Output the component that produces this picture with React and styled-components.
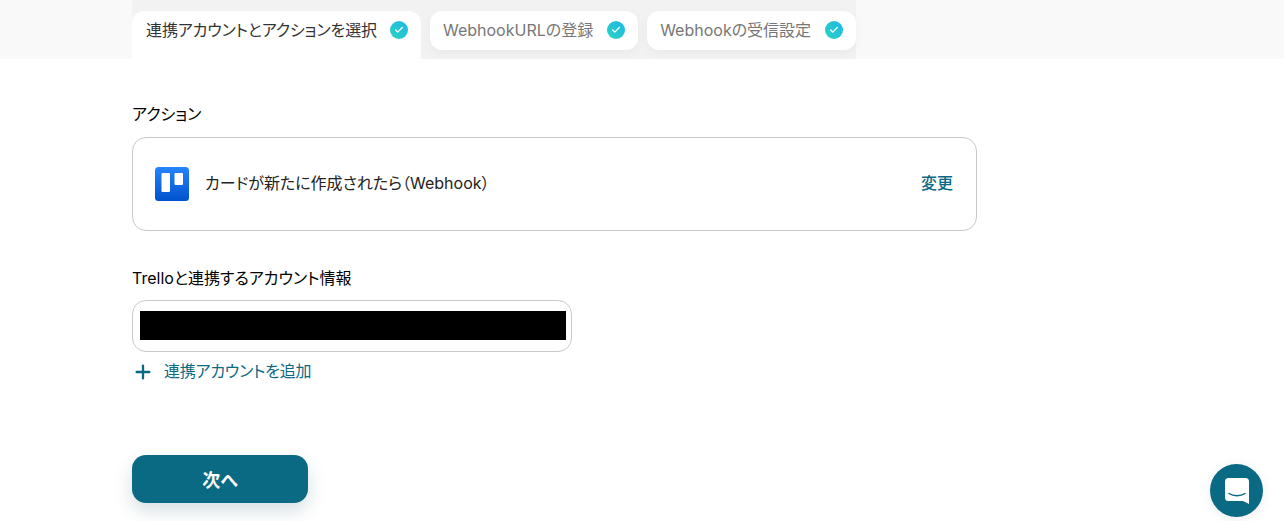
import styled, { createGlobalStyle } from 'styled-components';
import { LuPlus, LuCheck } from 'react-icons/lu';

const GlobalStyle = createGlobalStyle`
  html, body {
    margin: 0;
    padding: 0;
    background: #fff;
    overflow: hidden;
  }
  body {
    font-family: Inter, "Noto Sans CJK JP", sans-serif;
    font-feature-settings: "palt";
  }
`;

const Page = styled.div`
  width: 1284px;
  height: 521px;
  position: relative;
  overflow: hidden;
`;

const TabBar = styled.div`
  height: 59px;
  background: #f9f9f9;
  padding-left: 132px;
  box-sizing: border-box;
`;

const TabList = styled.div`
  display: inline-flex;
  align-items: flex-start;
  height: 59px;
  gap: 9px;
  background: #f2f2f2;
`;

const Tab = styled.div`
  display: flex;
  align-items: center;
  gap: ${props => (props.$active ? '13px' : '14px')};
  box-sizing: border-box;
  height: ${props => (props.$active ? '48px' : '39px')};
  margin-top: 11px;
  padding: ${props => (props.$active ? '0 13px 10px 14px' : '0 13px 1px 13px')};
  background: #fff;
  border-radius: ${props => (props.$active ? '12px 12px 0 0' : '12px')};
  color: ${props => (props.$active ? '#333' : '#777')};
  font-size: 16px;
  font-weight: 400;
  line-height: 20px;
  letter-spacing: ${props => (props.$active ? '-0.12px' : '0')};
  white-space: nowrap;
  box-shadow: ${props => (props.$active ? 'none' : '0 3px 10px rgba(0, 0, 0, 0.04)')};
`;

const CheckBadge = styled.span`
  display: flex;
  align-items: center;
  justify-content: center;
  width: 18px;
  height: 18px;
  border-radius: 50%;
  background: linear-gradient(45deg, #2bd4bd, #1fb6ea);
  color: #fff;
  font-size: 10px;
`;

const Main = styled.main`
  padding: 45px 0 0 132px;
`;

const Label = styled.div`
  font-size: 16px;
  font-weight: 400;
  line-height: 20px;
  color: #000;
`;

const ActionCard = styled.div`
  display: flex;
  align-items: center;
  box-sizing: border-box;
  width: 845px;
  height: 94px;
  margin-top: 13px;
  padding: 0 23px 0 22px;
  border: 1px solid #c9c9c9;
  border-radius: 14px;
`;

const ActionName = styled.span`
  flex: 1;
  margin-left: 16px;
  padding-bottom: 2px;
  font-size: 16px;
  line-height: 20px;
  color: #222;
`;

const ChangeLink = styled.span`
  padding-bottom: 2px;
  color: #0a6983;
  font-size: 16px;
  font-weight: 500;
  line-height: 20px;
`;

const AccountLabel = styled(Label)`
  margin-top: 37px;
`;

const AccountBox = styled.div`
  box-sizing: border-box;
  width: 440px;
  height: 52px;
  margin-top: 12px;
  padding: 10px 5px 0 7px;
  border: 1px solid #c9c9c9;
  border-radius: 14px;
`;

const Redacted = styled.div`
  height: 29px;
  background: #000;
`;

const AddAccount = styled.div`
  display: flex;
  align-items: center;
  gap: 10px;
  height: 20px;
  margin-top: 10px;
  color: #0a6983;
  font-size: 16px;
  font-weight: 400;
  line-height: 20px;
`;

const AddText = styled.span`
  padding-bottom: 2px;
  letter-spacing: -0.2px;
`;

const PrimaryButton = styled.button`
  display: block;
  width: 176px;
  height: 48px;
  margin-top: 73px;
  padding: 0;
  border: none;
  border-radius: 14px;
  background: #0a6983;
  color: #fff;
  font-family: inherit;
  font-feature-settings: inherit;
  font-size: 18px;
  font-weight: 700;
  box-shadow: 0 8px 18px rgba(10, 60, 80, 0.16);
`;

const ChatBubble = styled.div`
  position: absolute;
  left: 1210px;
  top: 464px;
  width: 53px;
  height: 53px;
  display: flex;
  align-items: center;
  justify-content: center;
  border-radius: 50%;
  background: #0a6983;
  box-shadow: 0 2px 12px rgba(0, 0, 0, 0.08);
`;

const TrelloLogo = () => (
  <svg width="34" height="34" viewBox="0 0 34 34" style={{ flexShrink: 0 }}>
    <defs>
      <linearGradient id="trelloGrad" x1="0" y1="0" x2="0" y2="1">
        <stop offset="0" stopColor="#2684ff" />
        <stop offset="1" stopColor="#0052cc" />
      </linearGradient>
    </defs>
    <rect width="34" height="34" rx="3.500" fill="url(#trelloGrad)" />
    <rect x="6.500" y="6" width="8.500" height="19" rx="1" fill="#fff" />
    <rect x="19.500" y="6" width="8.500" height="12" rx="1" fill="#fff" />
  </svg>
);

const ChatIcon = () => (
  <svg width="24" height="26" viewBox="0 0 24 26">
    <path
      d="M3.5 0h17A3.5 3.5 0 0 1 24 3.5V26l-6-3H3.5A3.5 3.5 0 0 1 0 19.500V3.500A3.500 3.500 0 0 1 3.500 0z"
      fill="#fff"
    />
    <path d="M4 15.500c4.500 3 11.500 3 16 0" fill="none" stroke="#0a6983" strokeWidth="1.500" strokeLinecap="round" />
  </svg>
);

const tabs = [
  { label: '連携アカウントとアクションを選択', active: true },
  { label: 'WebhookURLの登録' },
  { label: 'Webhookの受信設定' },
];

const App = () => (
  <Page>
    <GlobalStyle />
    <TabBar>
      <TabList>
        {tabs.map(tab => (
          <Tab key={tab.label} $active={tab.active}>
            {tab.label}
            <CheckBadge><LuCheck strokeWidth={3} /></CheckBadge>
          </Tab>
        ))}
      </TabList>
    </TabBar>
    <Main>
      <Label>アクション</Label>
      <ActionCard>
        <TrelloLogo />
        <ActionName>カードが新たに作成されたら（Webhook）</ActionName>
        <ChangeLink>変更</ChangeLink>
      </ActionCard>
      <AccountLabel>Trelloと連携するアカウント情報</AccountLabel>
      <AccountBox>
        <Redacted />
      </AccountBox>
      <AddAccount>
        <LuPlus size={22} strokeWidth={2.5} />
        <AddText>連携アカウントを追加</AddText>
      </AddAccount>
      <PrimaryButton>次へ</PrimaryButton>
    </Main>
    <ChatBubble>
      <ChatIcon />
    </ChatBubble>
  </Page>
);

export default App;
